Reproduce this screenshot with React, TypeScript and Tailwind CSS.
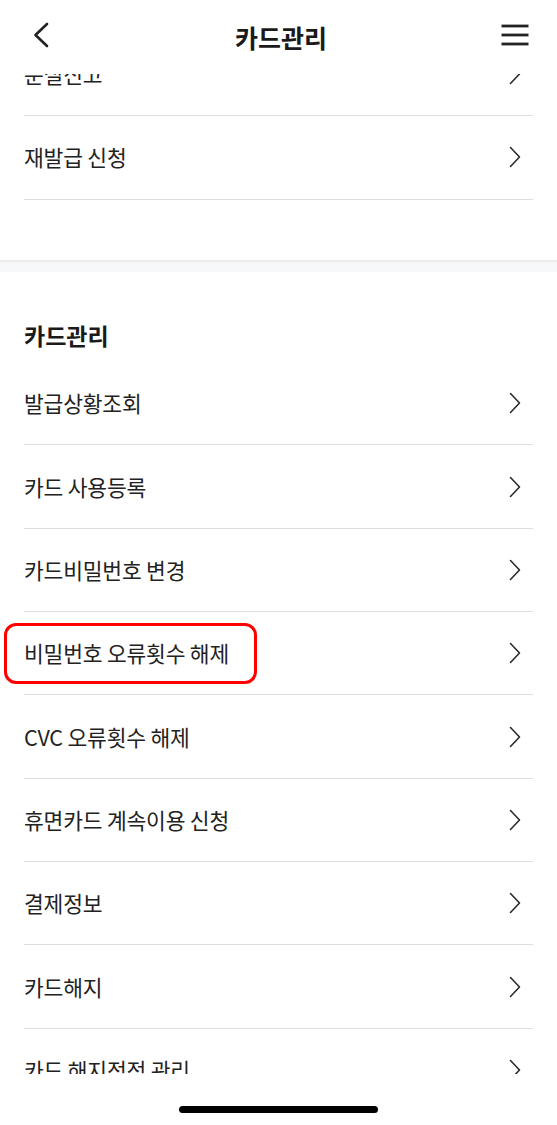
import React from 'react';

const Chevron = () => (
  <svg width="12" height="22" viewBox="0 0 12 22" fill="none">
    <polyline points="1.5,1.5 10.5,11 1.5,20.5" stroke="#2b2b2b" strokeWidth="1.6" strokeLinecap="round" strokeLinejoin="round" />
  </svg>
);

function Row({ label, highlight }: { label: string; highlight?: boolean }) {
  return (
    <li className="relative h-[83.33px] border-b-[1.5px] border-[#dedede] flex items-center justify-between pr-[12px]">
      <span className="text-[21.5px] leading-[28px] text-[#222] tracking-[-0.2px]">{label}</span>
      <Chevron />
      {highlight && (
        <div className="absolute left-[-20px] top-[11px] w-[253px] h-[61px] border-[3.5px] border-[#ff0000] rounded-[12px]" />
      )}
    </li>
  );
}

export default function App() {
  const topItems = ['분실신고', '재발급 신청'];
  const cardItems = [
    '발급상황조회',
    '카드 사용등록',
    '카드비밀번호 변경',
    '비밀번호 오류횟수 해제',
    'CVC 오류횟수 해제',
    '휴면카드 계속이용 신청',
    '결제정보',
    '카드해지',
    '카드 해지정정 관리',
  ];

  return (
    <div className="w-[557px] h-[1125px] bg-white flex flex-col overflow-hidden font-['Noto_Sans_CJK_KR','Noto_Sans',sans-serif]">
      {/* header */}
      <header className="h-[74px] shrink-0 bg-white relative z-10">
        <div className="h-[70px] grid grid-cols-[1fr_auto_1fr] items-center pl-[33px] pr-[28px]">
          <svg width="16" height="26" viewBox="0 0 16 26" fill="none">
            <polyline points="14,2 2.5,13 14,24" stroke="#222" strokeWidth="2.6" strokeLinecap="round" strokeLinejoin="round" />
          </svg>
          <h1 className="text-[25px] leading-[30px] font-bold text-[#1a1a1a] mt-[3px]">카드관리</h1>
          <div className="flex justify-end">
            <svg width="28" height="22" viewBox="0 0 28 22" fill="none">
              <line x1="0.5" y1="2" x2="27.5" y2="2" stroke="#222" strokeWidth="2.8" />
              <line x1="0.5" y1="11" x2="27.5" y2="11" stroke="#222" strokeWidth="2.8" />
              <line x1="0.5" y1="20" x2="27.5" y2="20" stroke="#222" strokeWidth="2.8" />
            </svg>
          </div>
        </div>
      </header>

      {/* scrolled content */}
      <div className="flex-1 overflow-hidden">
        <div className="mt-[-41px]">
          <ul className="mx-[24px]">
            {topItems.map((t) => (
              <Row key={t} label={t} />
            ))}
          </ul>
          <div className="h-[60.5px]" />
          <div className="h-[12px] border-t-2 border-[#ebebeb] bg-[#f7f8fa]" />
          <section>
            <h2 className="mx-[24px] pt-[48px] pb-[12px] text-[23px] leading-[30px] font-bold text-[#1a1a1a]">카드관리</h2>
            <ul className="mx-[24px]">
              {cardItems.map((t) => (
                <Row key={t} label={t} highlight={t === '비밀번호 오류횟수 해제'} />
              ))}
            </ul>
          </section>
        </div>
      </div>

      {/* home indicator */}
      <div className="h-[51px] shrink-0 bg-white flex items-end justify-center pb-[12px] relative z-10">
        <div className="w-[199px] h-[7px] rounded-full bg-black" />
      </div>
    </div>
  );
}
